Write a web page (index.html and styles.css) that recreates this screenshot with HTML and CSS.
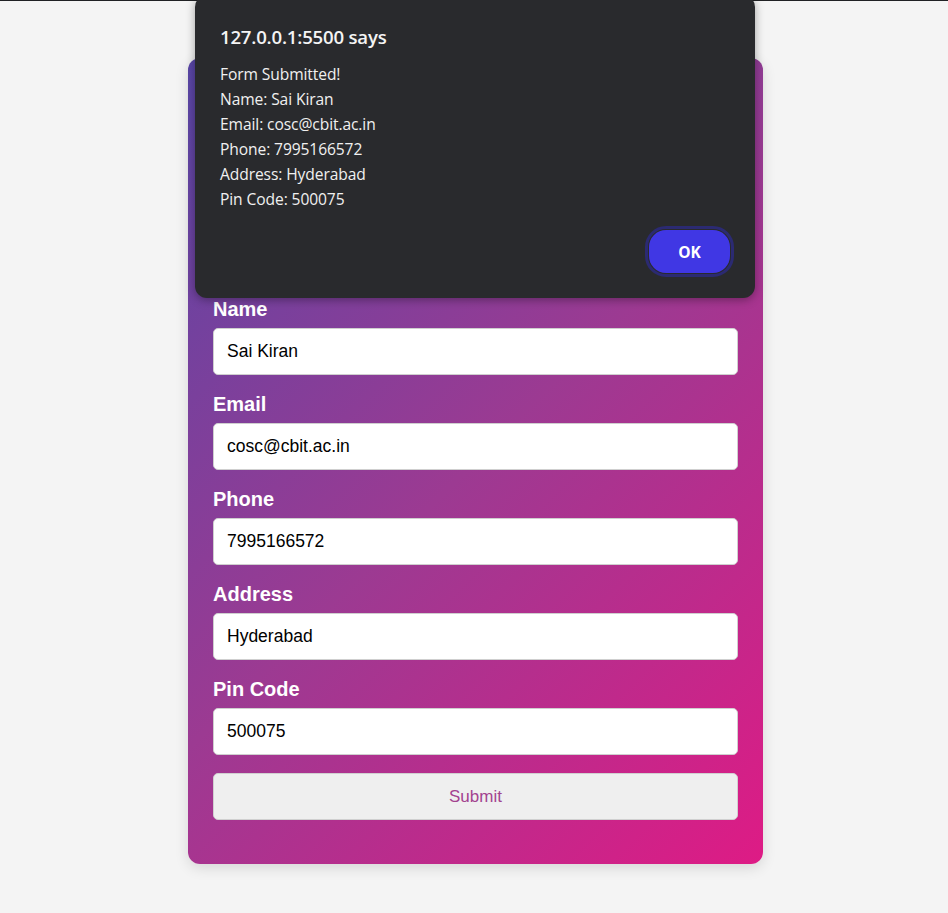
FILE: index.html
```html
<!DOCTYPE html>
<html lang="en">
<head>
<meta charset="utf-8">
<title>Registration Form</title>
<link rel="stylesheet" href="styles.css">
</head>
<body>
<div class="topline"></div>
<main class="page">
  <form class="card">
    <div class="card-head">
      <h2 class="card-title">Registration Form</h2>
    </div>
    <label class="field-label">Name</label>
    <input class="field-input" type="text" value="Sai Kiran">
    <label class="field-label">Email</label>
    <input class="field-input" type="text" value="cosc@cbit.ac.in">
    <label class="field-label">Phone</label>
    <input class="field-input" type="text" value="7995166572">
    <label class="field-label">Address</label>
    <input class="field-input" type="text" value="Hyderabad">
    <label class="field-label">Pin Code</label>
    <input class="field-input" type="text" value="500075">
    <button class="submit-btn" type="button">Submit</button>
  </form>
</main>
<div class="dialog">
  <div class="dialog-title">127.0.0.1:5500 says</div>
  <div class="dialog-body">
    <div>Form Submitted!</div>
    <div>Name: Sai Kiran</div>
    <div>Email: cosc@cbit.ac.in</div>
    <div>Phone: 7995166572</div>
    <div>Address: Hyderabad</div>
    <div>Pin Code: 500075</div>
  </div>
  <div class="dialog-actions">
    <button class="ok-btn" type="button">OK</button>
  </div>
</div>
</body>
</html>
```
FILE: styles.css
```css
* { box-sizing: border-box; }
html, body { margin: 0; padding: 0; }
body {
  background: #f4f4f4;
  font-family: "Liberation Sans", Arial, sans-serif;
  height: 913px;
  overflow: hidden;
}
.topline {
  height: 1px;
  background: #202124;
}
.page {
  display: flex;
  justify-content: center;
  padding: 57px 0 0 3px;
}
.card {
  width: 575px;
  padding: 25px;
  border-radius: 12px;
  background: linear-gradient(135deg, #5846a6 0%, #9c3a92 50%, #de1b85 100%);
  box-shadow: 0 4px 14px rgba(0, 0, 0, 0.12);
  display: flex;
  flex-direction: column;
}
.card-head {
  height: 215px;
}
.card-title {
  margin: 10px 0 0;
  color: #fff;
  text-align: center;
  font-size: 28px;
}
.field-label {
  display: block;
  color: #fff;
  font-weight: bold;
  font-size: 20px;
  line-height: 23px;
  margin-bottom: 7px;
}
.field-input {
  display: block;
  width: 100%;
  height: 47px;
  margin: 0 0 18px;
  padding: 0 13px;
  border: 1px solid #cfcfcf;
  border-radius: 5px;
  background: #fff;
  color: #000;
  font-family: "Liberation Sans", Arial, sans-serif;
  font-size: 17.5px;
}
.submit-btn {
  display: block;
  width: 100%;
  height: 47px;
  margin: 0 0 19px;
  border: 1px solid #d0d0d0;
  border-radius: 5px;
  background: #efefef;
  color: #a3438f;
  font-family: "Liberation Sans", Arial, sans-serif;
  font-size: 17px;
  padding-top: 2px;
}
.dialog {
  position: absolute;
  left: 195px;
  top: -5px;
  width: 560px;
  height: 303px;
  background: #292a2d;
  border-radius: 12px;
  box-shadow: 0 2px 10px rgba(0, 0, 0, 0.35);
  padding: 28px 25px 25px 25px;
  color: #f0f0f0;
  font-family: "Open Sans", "Noto Sans", sans-serif;
  display: flex;
  flex-direction: column;
}
.dialog-title {
  font-size: 18.6px;
  font-weight: 600;
  line-height: 28px;
  color: #f4f4f4;
  letter-spacing: -0.2px;
}
.dialog-body {
  margin-top: 11px;
  font-size: 15.6px;
  line-height: 25px;
  letter-spacing: -0.1px;
}
.dialog-actions {
  margin-top: auto;
  display: flex;
  justify-content: flex-end;
}
.ok-btn {
  width: 81px;
  height: 43px;
  border: none;
  border-radius: 17px;
  background: #4037e4;
  color: #fff;
  font-family: "Open Sans", "Noto Sans", sans-serif;
  font-weight: 700;
  font-size: 15.5px;
  outline: 3px solid #2b2a72;
  outline-offset: 1px;
}
```
